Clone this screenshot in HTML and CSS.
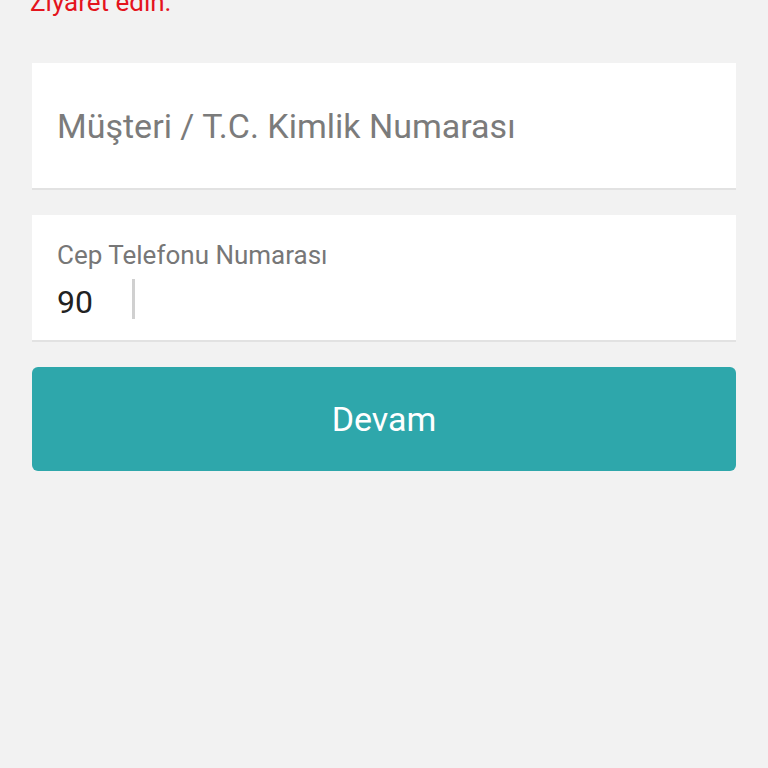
FILE: index.html
```html
<!DOCTYPE html>
<html lang="tr">
<head>
    <meta charset="UTF-8">
    <meta name="viewport" content="width=device-width, initial-scale=1.0">
    <title>Giriş</title>
    <link rel="stylesheet" href="styles.css">
</head>
<body>
    <div class="container">
        <p class="notice">Ziyaret edin.</p>

        <div class="field field-single">
            <input type="text" class="field-input" placeholder="Müşteri / T.C. Kimlik Numarası">
        </div>

        <div class="field field-phone">
            <label class="field-label" for="phone">Cep Telefonu Numarası</label>
            <div class="phone-row">
                <span class="phone-code">90</span>
                <span class="phone-divider"></span>
                <input type="tel" id="phone" class="phone-input">
            </div>
        </div>

        <button class="btn-continue">Devam</button>
    </div>
</body>
</html>
```

FILE: styles.css
```css
body {
    margin: 0;
    background-color: #f2f2f2;
    font-family: Roboto, "Noto Sans", sans-serif;
}
.container {
    padding: 0 32px;
}
.notice {
    margin: -15px 0 0 -2px;
    color: #e4141d;
    font-size: 26px;
    line-height: 34px;
}
.field {
    background-color: #fff;
    border-bottom: 2px solid #e2e2e2;
    box-sizing: border-box;
}
.field-single {
    margin-top: 44px;
    height: 127px;
    display: flex;
    align-items: center;
    padding: 0 25px;
}
.field-input {
    width: 100%;
    border: none;
    outline: none;
    padding: 0;
    font-family: inherit;
    font-size: 34px;
    color: #333;
    background: transparent;
}
.field-input::placeholder {
    color: #7b7b7b;
}
.field-phone {
    margin-top: 25px;
    height: 127px;
    padding: 24px 25px 0;
}
.field-label {
    display: block;
    font-size: 26px;
    line-height: 32px;
    color: #777;
}
.phone-row {
    display: flex;
    align-items: center;
    height: 48px;
    margin-top: 4px;
}
.phone-code {
    width: 75px;
    padding-top: 6px;
    font-size: 32px;
    color: #222;
}
.phone-divider {
    width: 3px;
    height: 40px;
    background-color: #d0d0d0;
}
.phone-input {
    flex-grow: 1;
    border: none;
    outline: none;
    font-size: 32px;
    background: transparent;
}
.btn-continue {
    display: block;
    width: 100%;
    height: 104px;
    margin-top: 25px;
    background-color: #2ea7ab;
    color: #fff;
    border: none;
    border-radius: 6px;
    font-family: inherit;
    font-size: 34px;
    cursor: pointer;
}
```
